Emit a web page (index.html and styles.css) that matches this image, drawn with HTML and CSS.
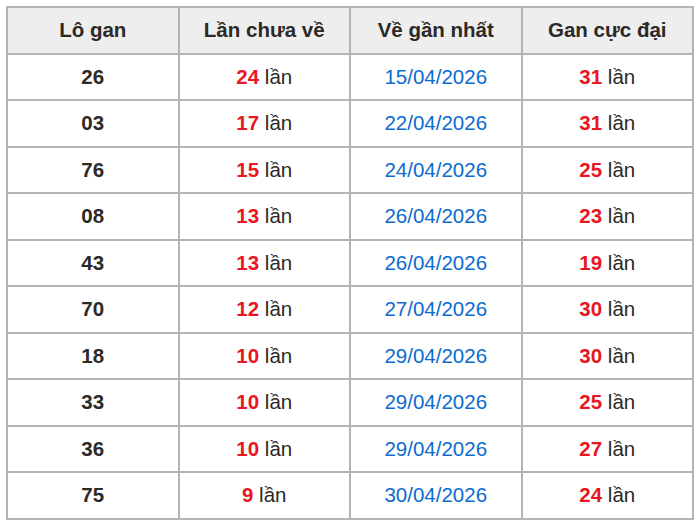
FILE: index.html
```html
<!DOCTYPE html>
<html lang="vi">
<head>
<meta charset="utf-8">
<link rel="stylesheet" href="styles.css">
</head>
<body>
<table class="gan">
<thead>
<tr><th>Lô gan</th><th>Lần chưa về</th><th>Về gần nhất</th><th>Gan cực đại</th></tr>
</thead>
<tbody>
<tr><td class="lo">26</td><td><span class="num">24</span> lần</td><td class="date">15/04/2026</td><td><span class="num">31</span> lần</td></tr>
<tr><td class="lo">03</td><td><span class="num">17</span> lần</td><td class="date">22/04/2026</td><td><span class="num">31</span> lần</td></tr>
<tr><td class="lo">76</td><td><span class="num">15</span> lần</td><td class="date">24/04/2026</td><td><span class="num">25</span> lần</td></tr>
<tr><td class="lo">08</td><td><span class="num">13</span> lần</td><td class="date">26/04/2026</td><td><span class="num">23</span> lần</td></tr>
<tr><td class="lo">43</td><td><span class="num">13</span> lần</td><td class="date">26/04/2026</td><td><span class="num">19</span> lần</td></tr>
<tr><td class="lo">70</td><td><span class="num">12</span> lần</td><td class="date">27/04/2026</td><td><span class="num">30</span> lần</td></tr>
<tr><td class="lo">18</td><td><span class="num">10</span> lần</td><td class="date">29/04/2026</td><td><span class="num">30</span> lần</td></tr>
<tr><td class="lo">33</td><td><span class="num">10</span> lần</td><td class="date">29/04/2026</td><td><span class="num">25</span> lần</td></tr>
<tr><td class="lo">36</td><td><span class="num">10</span> lần</td><td class="date">29/04/2026</td><td><span class="num">27</span> lần</td></tr>
<tr><td class="lo">75</td><td><span class="num">9</span> lần</td><td class="date">30/04/2026</td><td><span class="num">24</span> lần</td></tr>
</tbody>
</table>
</body>
</html>
```
FILE: styles.css
```css
html, body {
  margin: 0;
  background: #ffffff;
}
body {
  padding: 6px;
  font-family: "Liberation Sans", Arial, sans-serif;
  color: #2b2a27;
}
.gan {
  width: 688px;
  border-collapse: collapse;
  table-layout: fixed;
  font-size: 20.5px;
}
.gan tr {
  height: 46.5px;
}
.gan th,
.gan td {
  border: 2px solid #b4b4b4;
  text-align: center;
  vertical-align: middle;
  padding: 0;
}
.gan th {
  background: #eeeeee;
  font-weight: bold;
  color: #2b2a27;
}
.gan .lo {
  font-weight: bold;
}
.gan .num {
  font-weight: bold;
  color: #e8161e;
}
.gan .date {
  color: #0d6bd0;
}
```
